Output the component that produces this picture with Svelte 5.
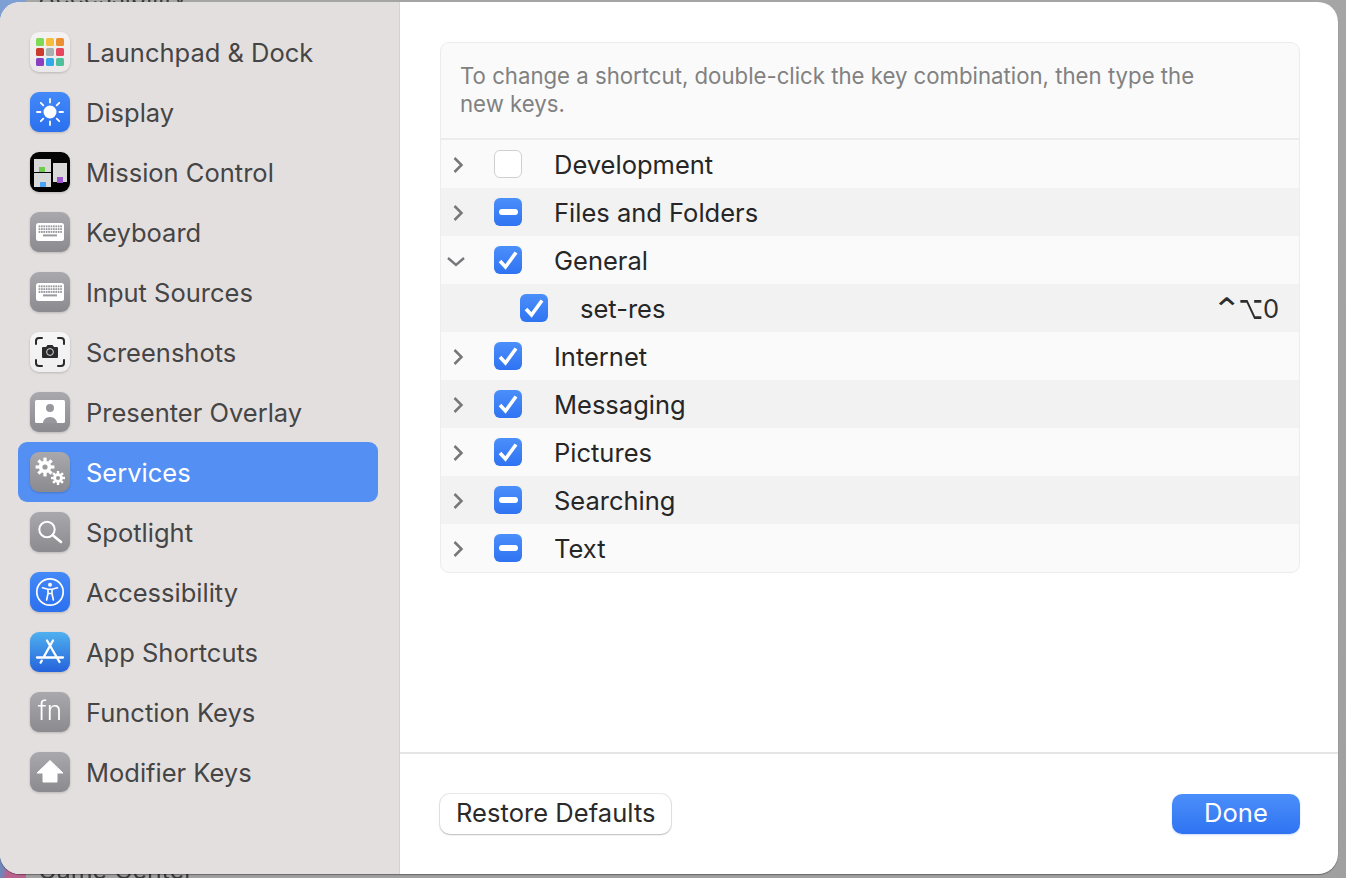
<script>
  const sidebarItems = [
    { id: 'launchpad', label: 'Launchpad & Dock' },
    { id: 'display', label: 'Display' },
    { id: 'mission', label: 'Mission Control' },
    { id: 'keyboard', label: 'Keyboard' },
    { id: 'input', label: 'Input Sources' },
    { id: 'screenshots', label: 'Screenshots' },
    { id: 'presenter', label: 'Presenter Overlay' },
    { id: 'services', label: 'Services', selected: true },
    { id: 'spotlight', label: 'Spotlight' },
    { id: 'accessibility', label: 'Accessibility' },
    { id: 'appshortcuts', label: 'App Shortcuts' },
    { id: 'fn', label: 'Function Keys' },
    { id: 'modifier', label: 'Modifier Keys' }
  ];

  const rows = [
    { label: 'Development', state: 'off', arrow: 'right' },
    { label: 'Files and Folders', state: 'mixed', arrow: 'right' },
    { label: 'General', state: 'on', arrow: 'down' },
    { label: 'set-res', state: 'on', child: true, keys: true },
    { label: 'Internet', state: 'on', arrow: 'right' },
    { label: 'Messaging', state: 'on', arrow: 'right' },
    { label: 'Pictures', state: 'on', arrow: 'right' },
    { label: 'Searching', state: 'mixed', arrow: 'right' },
    { label: 'Text', state: 'mixed', arrow: 'right' }
  ];

  const launchColors = ['#7ed957', '#f5bd3f', '#ec8f32', '#cc3a2e', '#a9b0b2', '#e8485f', '#8a3fc0', '#35a8ec', '#4fc09a'];
  const keyCols = [0, 1, 2, 3, 4, 5, 6, 7, 8, 9];
  const gearTeeth = [0, 45, 90, 135, 180, 225, 270, 315];
  const sunRays = [0, 45, 90, 135, 180, 225, 270, 315];
</script>

<div class="backdrop">
  <span class="back-title top">Accessibility</span>
  <span class="back-title bottom">Game Center</span>
  <span class="back-icon top"></span>
  <span class="back-icon bottom"></span>

  <div class="window">
    <aside class="sidebar">
      {#each sidebarItems as item}
        <div class="side-item" class:selected={item.selected}>
          <svg class="app-icon" viewBox="0 0 40 40" width="40" height="40">
            <defs>
              <linearGradient id="g-{item.id}" x1="0" y1="0" x2="0" y2="1">
                {#if ['display', 'accessibility'].includes(item.id)}
                  <stop offset="0" stop-color="#4389f8" /><stop offset="1" stop-color="#2b70ee" />
                {:else if item.id === 'appshortcuts'}
                  <stop offset="0" stop-color="#4fb0ee" /><stop offset="1" stop-color="#2563dc" />
                {:else if item.id === 'launchpad'}
                  <stop offset="0" stop-color="#f4f2f2" /><stop offset="1" stop-color="#eae8e8" />
                {:else if item.id === 'screenshots'}
                  <stop offset="0" stop-color="#f6f6f6" /><stop offset="1" stop-color="#efefef" />
                {:else if item.id === 'mission'}
                  <stop offset="0" stop-color="#050505" /><stop offset="1" stop-color="#000" />
                {:else}
                  <stop offset="0" stop-color="#a9a8ac" /><stop offset="1" stop-color="#8b8a8e" />
                {/if}
              </linearGradient>
            </defs>
            <rect width="40" height="40" rx="9" fill="url(#g-{item.id})" />

            {#if item.id === 'launchpad'}
              {#each launchColors as color, i}
                <rect x={6 + (i % 3) * 10} y={6 + Math.floor(i / 3) * 10} width="8" height="8" rx="1.5" fill={color} />
              {/each}
            {:else if item.id === 'display'}
              <circle cx="20" cy="20" r="6.5" fill="#fff" />
              {#each sunRays as a}
                <line x1="20" y1="7" x2="20" y2="10.5" stroke="#fff" stroke-width="1.8" stroke-linecap="round" transform="rotate({a} 20 20)" />
              {/each}
            {:else if item.id === 'mission'}
              <rect x="4" y="7" width="17" height="13" fill="#d9d9d9" />
              <rect x="4" y="21" width="17" height="14" fill="#d9d9d9" />
              <rect x="23" y="11" width="14" height="19" fill="#d9d9d9" />
              <rect x="9" y="15" width="6" height="5" fill="#6ecb4d" />
              <rect x="10" y="30" width="6" height="5" fill="#4aa3f5" />
              <rect x="27" y="25" width="6" height="6" fill="#9a57cf" />
            {:else if item.id === 'keyboard' || item.id === 'input'}
              <rect x="6" y="11" width="28" height="18" rx="2.5" fill="#fff" />
              {#each [0, 1, 2] as r}
                {#each keyCols as c}
                  <rect x={8.6 + c * 2.4} y={13.4 + r * 2.8} width="1.7" height="1.9" fill="#9a9a9e" />
                {/each}
              {/each}
              <rect x="13" y="22.4" width="14" height="2" fill="#9a9a9e" />
            {:else if item.id === 'screenshots'}
              <path d="M6 12V9a3 3 0 0 1 3-3h3M28 6h3a3 3 0 0 1 3 3v3M34 28v3a3 3 0 0 1-3 3h-3M12 34H9a3 3 0 0 1-3-3v-3" fill="none" stroke="#2a2a2c" stroke-width="2" stroke-linecap="round" />
              <path d="M13 15h3l1.5-2h5l1.5 2h3a1 1 0 0 1 1 1v9a1 1 0 0 1-1 1H13a1 1 0 0 1-1-1v-9a1 1 0 0 1 1-1z" fill="#2a2a2c" />
              <circle cx="20" cy="20" r="3.4" fill="none" stroke="#ddd" stroke-width="1" />
            {:else if item.id === 'presenter'}
              <rect x="5" y="8" width="30" height="23" rx="1.5" fill="#fff" />
              <circle cx="20" cy="16" r="4" fill="#98979b" />
              <path d="M13 31c0-3 3-6 7-6s7 3 7 6z" fill="#98979b" />
            {:else if item.id === 'services'}
              <g fill="#fff">
                <circle cx="15" cy="15" r="6.2" />
                {#each gearTeeth as a}
                  <rect x="13.4" y="5.6" width="3.2" height="4" transform="rotate({a} 15 15)" />
                {/each}
                <circle cx="28" cy="26" r="4.8" />
                {#each gearTeeth as a}
                  <rect x="26.8" y="19" width="2.4" height="3" transform="rotate({a} 28 26)" />
                {/each}
              </g>
              <circle cx="15" cy="15" r="2.6" fill="#9b9a9e" />
              <circle cx="28" cy="26" r="2" fill="#969599" />
            {:else if item.id === 'spotlight'}
              <circle cx="17" cy="17.5" r="7.7" fill="none" stroke="#fff" stroke-width="2" />
              <line x1="22.8" y1="23.2" x2="31" y2="30" stroke="#fff" stroke-width="2.6" stroke-linecap="round" />
            {:else if item.id === 'accessibility'}
              <circle cx="20" cy="20" r="13.2" fill="none" stroke="#fff" stroke-width="1.7" />
              <circle cx="20" cy="12.8" r="2" fill="#fff" />
              <path d="M12.5 15.8 L18 17.2 V21.5 L16.6 28 M27.5 15.8 L22 17.2 V21.5 L23.4 28 M18 17.2h4M18 21.5h4" fill="none" stroke="#fff" stroke-width="1.6" stroke-linecap="round" stroke-linejoin="round" />
            {:else if item.id === 'appshortcuts'}
              <path d="M17 8.5 L29.5 30 M23 8.5 L14 24.5 M11.8 28.6 L10.6 30.6 M7 25.5 H33" fill="none" stroke="#fff" stroke-width="2.3" stroke-linecap="round" />
            {:else if item.id === 'fn'}
              <text x="20" y="28" text-anchor="middle" class="fn-text">fn</text>
            {:else if item.id === 'modifier'}
              <path d="M20 8.5 L33 21 H27 V30 H13 V21 H7 Z" fill="#fff" stroke="#fff" stroke-width="1" stroke-linejoin="round" />
            {/if}
          </svg>
          <span class="side-label">{item.label}</span>
        </div>
      {/each}
    </aside>

    <main class="content">
      <div class="panel-wrap">
        <section class="panel">
          <p class="hint">To change a shortcut, double-click the key combination, then type the new keys.</p>
          <div class="rows">
            {#each rows as row, i}
              <div class="row" class:odd={i % 2 === 1} class:child={row.child}>
                <span class="arrow">
                  {#if row.arrow === 'right'}
                    <svg class="right" viewBox="0 0 12 16" width="12" height="16"><path d="M2.5 1l7 7-7 7" fill="none" stroke="#77777a" stroke-width="2.5" /></svg>
                  {:else if row.arrow === 'down'}
                    <svg class="down" viewBox="0 0 18 12" width="18" height="12"><path d="M1 2l8 7 8-7" fill="none" stroke="#77777a" stroke-width="2.4" /></svg>
                  {/if}
                </span>
                <span class="check {row.state}">
                  {#if row.state === 'on'}
                    <svg viewBox="0 0 28 28" width="28" height="28"><path d="M6 15l5.5 6L22 6.5" fill="none" stroke="#fff" stroke-width="3.6" /></svg>
                  {:else if row.state === 'mixed'}
                    <span class="dash"></span>
                  {/if}
                </span>
                <span class="row-label">{row.label}</span>
                {#if row.keys}
                  <span class="keys"><span class="ctrl">⌃</span><span class="opt">⌥</span><span class="zero">0</span></span>
                {/if}
              </div>
            {/each}
          </div>
        </section>
      </div>

      <footer class="footer">
        <button class="btn">Restore Defaults</button>
        <button class="btn primary">Done</button>
      </footer>
    </main>
  </div>
</div>

<style>
  :global(body) {
    margin: 0;
    overflow: hidden;
  }

  .backdrop {
    position: relative;
    width: 1346px;
    height: 878px;
    padding-top: 2px;
    box-sizing: border-box;
    overflow: hidden;
    background: linear-gradient(#a5a5a5, #a0a0a0);
    font-family: Inter, "Liberation Sans", sans-serif;
  }

  .back-title {
    position: absolute;
    left: 38px;
    font-size: 25px;
    color: #3c3c3c;
    filter: blur(0.5px);
  }

  .back-title.top {
    top: -19px;
  }

  .back-title.bottom {
    top: 855px;
  }

  .back-icon {
    position: absolute;
    left: 0;
    width: 26px;
    height: 26px;
  }

  .back-icon.top {
    top: 0;
    background: #7d9fd4;
  }

  .back-icon.bottom {
    top: 852px;
    background: linear-gradient(100deg, #6e86b8 18%, #b9628e 36%);
  }

  .window {
    position: relative;
    width: 1338px;
    height: 872px;
    display: flex;
    background: #fff;
    border-radius: 20px;
    overflow: hidden;
    box-shadow: 0 1px 1px rgba(0, 0, 0, 0.35);
  }

  .sidebar {
    width: 400px;
    flex: none;
    box-sizing: border-box;
    padding: 20px 21px 0 18px;
    background: #e4dfdf;
    border-right: 1px solid #d6d2d2;
  }

  .side-item {
    display: flex;
    align-items: center;
    gap: 16px;
    height: 60px;
    padding-left: 12px;
    border-radius: 9px;
    color: #454545;
  }

  .side-item.selected {
    background: #5490f4;
    color: #fff;
  }

  .app-icon {
    flex: none;
    filter: drop-shadow(0 1px 1px rgba(0, 0, 0, 0.18));
  }

  .side-label {
    font-size: 25.5px;
  }

  .fn-text {
    font-family: Inter, "Liberation Sans", sans-serif;
    font-size: 26px;
    font-weight: 300;
    fill: #fff;
  }

  .content {
    flex: 1;
    display: flex;
    flex-direction: column;
    min-width: 0;
  }

  .panel-wrap {
    flex: 1;
    padding: 40px 38px 0 40px;
    border-bottom: 2px solid #e5e5e5;
  }

  .panel {
    border: 1px solid #ececec;
    border-radius: 9px;
    background: #fafafa;
    overflow: hidden;
  }

  .hint {
    margin: 0;
    padding: 19px 80px 19px 19px;
    height: 97px;
    box-sizing: border-box;
    font-size: 22.2px;
    line-height: 28px;
    color: #818181;
    border-bottom: 2px solid #ececec;
  }

  .row {
    position: relative;
    display: flex;
    align-items: center;
    height: 48px;
    padding-right: 20px;
    color: #262626;
  }

  .row.odd {
    background: #f2f2f2;
  }

  .row:not(.child) .arrow {
    width: 53px;
  }

  .row.child .arrow {
    width: 79px;
  }

  .arrow {
    flex: none;
    display: flex;
    align-items: center;
    padding-left: 11px;
    box-sizing: border-box;
  }

  .arrow .right {
    margin-top: 2px;
  }

  .arrow .down {
    margin-left: -5px;
    margin-top: 4px;
  }

  .check {
    flex: none;
    width: 28px;
    height: 28px;
    border-radius: 6px;
    box-sizing: border-box;
    display: flex;
    align-items: center;
    justify-content: center;
    background: linear-gradient(#4b8ffb, #2f73f2);
  }

  .check.off {
    background: #fff;
    border: 1px solid #cfcfcf;
  }

  .dash {
    width: 19px;
    height: 6px;
    border-radius: 3px;
    background: #fff;
  }

  .row-label {
    margin-left: 32px;
    font-size: 25.5px;
  }

  .keys {
    margin-left: auto;
    display: flex;
    align-items: center;
    font-family: "DejaVu Sans", "Noto Sans CJK JP", sans-serif;
    color: #2e2e2e;
  }

  .ctrl {
    font-size: 28px;
    line-height: 28px;
    transform: translateY(3px) scale(1.3, 1.15);
  }

  .opt {
    font-size: 21px;
    line-height: 28px;
    transform: scaleY(1.6);
  }

  .zero {
    font-family: Inter, sans-serif;
    font-size: 25.5px;
  }

  .footer {
    height: 120px;
    flex: none;
    box-sizing: border-box;
    display: flex;
    justify-content: space-between;
    align-items: flex-start;
    padding: 40px 38px 0 40px;
  }

  .btn {
    height: 40px;
    padding: 0 15px 3px 16px;
    border: none;
    border-radius: 10px;
    background: #fff;
    box-shadow: 0 0 0 1px rgba(0, 0, 0, 0.08), 0 1px 2px rgba(0, 0, 0, 0.2);
    font-family: inherit;
    font-size: 25.5px;
    letter-spacing: 0.05px;
    color: #2a2a2a;
  }

  .btn.primary {
    width: 128px;
    padding: 0 0 3px;
    color: #fff;
    background: linear-gradient(#4b8ffb, #2f73f2);
    box-shadow: 0 1px 2px rgba(47, 115, 242, 0.25);
  }
</style>
